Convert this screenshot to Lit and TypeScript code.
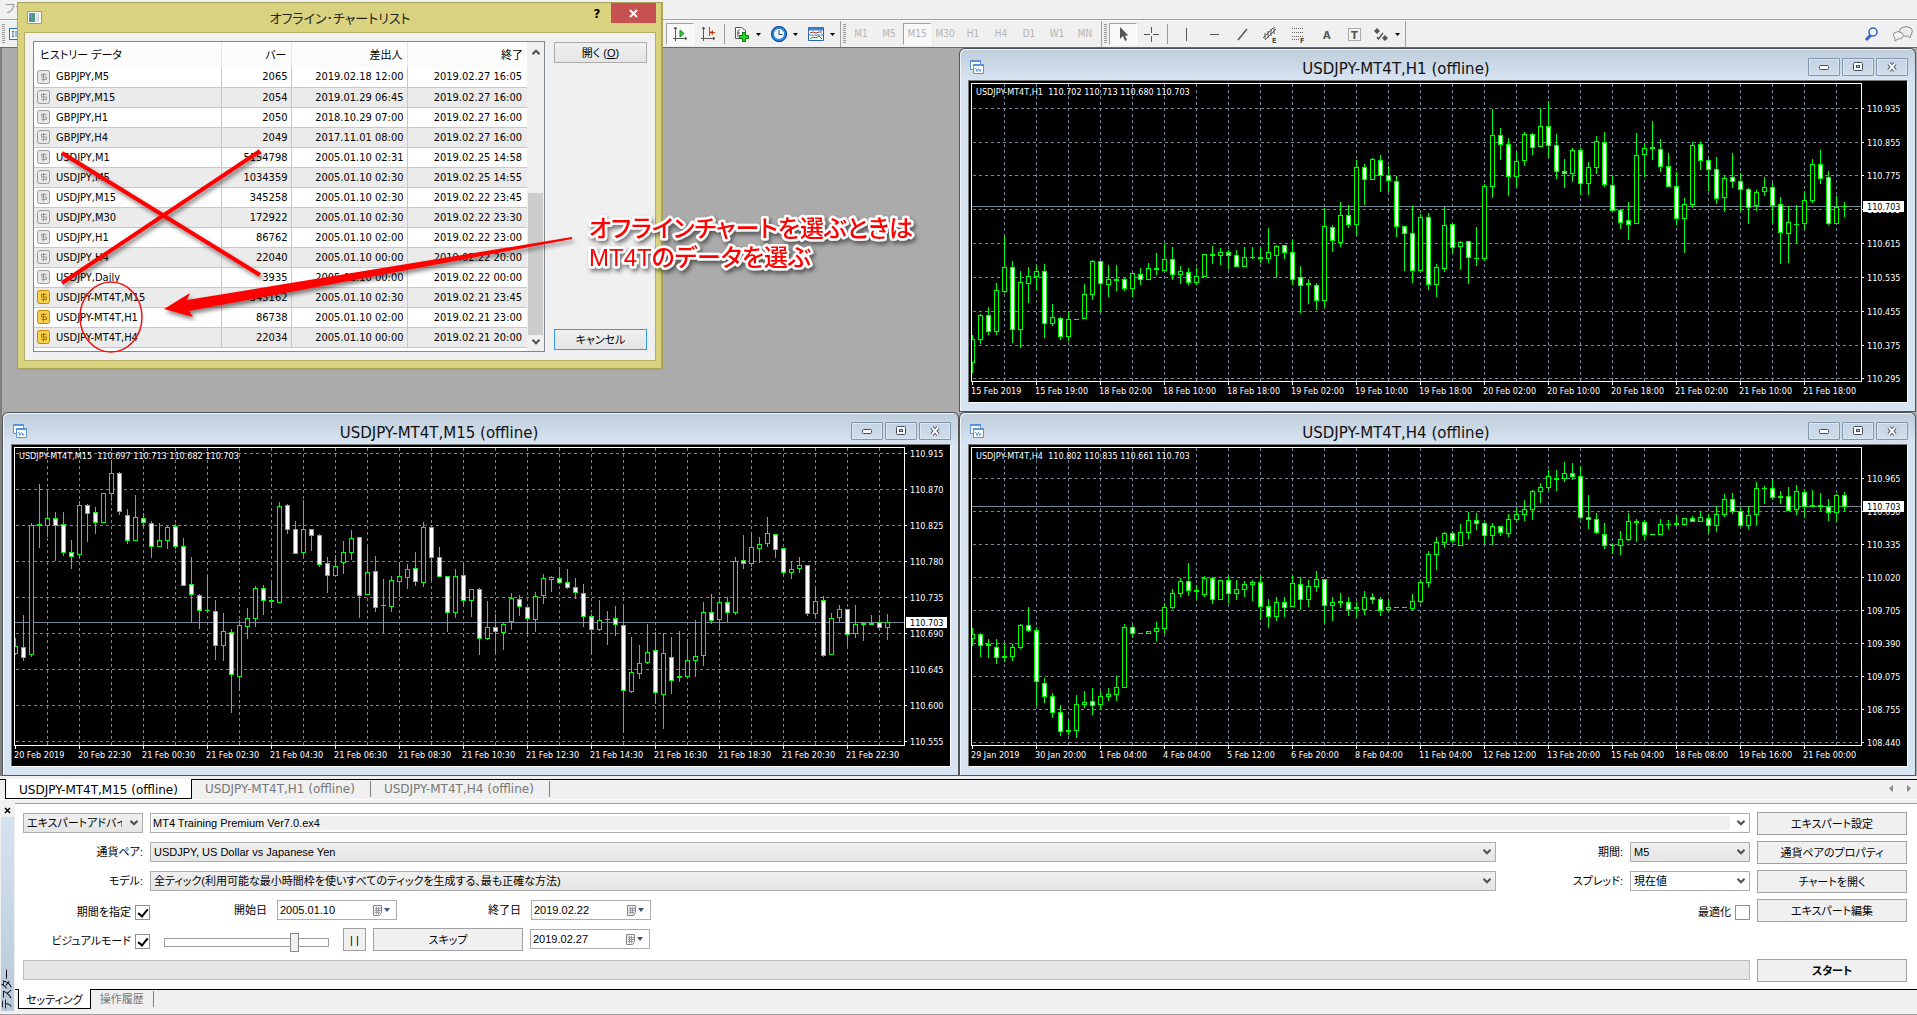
import { LitElement, html, svg, css } from "lit";
import { customElement, property } from "lit/decorators.js";

interface ChartSpec {
  name: string;
  info: string;
  origin: number;
  price: number;
  grid: number[];
  prices: string[];
  times: string[];
  bars: string;
}

/* Each bar is "high top bottom low direction"; levels count down in thirds of a pixel. */
const H1: ChartSpec = {
  name: "USDJPY-MT4T,H1 (offline)",
  info: "USDJPY-MT4T,H1\u00a0 110.702 110.713 110.680 110.703",
  origin: 4,
  price: 380,
  grid: [86, 188, 287, 388, 491, 593, 694, 797, 895],
  prices: ["110.935", "110.855", "110.775", "110.695", "110.615", "110.535", "110.455", "110.375", "110.295"],
  times: ["15 Feb 2019", "15 Feb 19:00", "18 Feb 02:00", "18 Feb 10:00", "18 Feb 18:00", "19 Feb 02:00", "19 Feb 10:00", "19 Feb 18:00", "20 Feb 02:00", "20 Feb 10:00", "20 Feb 18:00", "21 Feb 02:00", "21 Feb 10:00", "21 Feb 18:00"],
  bars: `765 778 848 880 u,702 706 779 792 u,682 706 755 765 d,609 631 755 765 u,465 562 635 640 u,543 562 749 789 d,
573 607 748 804 u,563 589 611 669 u,555 574 590 629 u,552 574 731 774 d,672 712 731 738 u,711 714 770 780 d,693 718 770 784 u,
718 718 718 718 u,612 643 716 716 u,540 544 644 660 u,544 544 611 693 d,555 598 614 651 u,555 599 601 633 u,595 598 626 635 d,
579 580 626 653 u,564 583 599 617 d,549 565 599 599 u,521 566 568 585 u,492 538 572 575 u,501 538 584 600 d,558 574 584 612 u,
565 577 608 617 d,565 589 608 617 u,523 523 590 590 u,498 523 525 552 u,505 517 527 555 u,510 517 526 568 d,510 526 560 563 d,
503 532 560 560 u,501 532 532 537 u,503 533 535 549 u,444 517 534 549 u,495 499 527 594 u,495 496 518 537 d,477 517 597 617 d,
558 592 617 699 d,597 610 612 672 u,610 616 662 690 d,384 439 662 683 u,435 442 482 518 d,366 406 486 503 u,375 406 434 444 d,
240 262 434 468 u,252 262 299 375 d,234 238 299 302 u,225 241 287 336 d,258 286 302 336 d,288 304 440 473 d,438 439 461 573 d,
378 460 572 609 d,402 412 570 573 u,399 412 614 630 d,552 562 614 651 u,381 436 566 576 u,432 433 503 521 d,483 487 500 570 u,
483 484 533 612 d,441 535 536 560 u,312 319 536 543 u,87 166 320 354 u,144 166 194 240 d,174 193 290 348 d,213 244 290 323 u,
156 163 242 258 u,159 163 203 225 d,84 139 200 200 u,63 139 197 234 d,162 196 275 297 d,237 274 281 324 d,204 211 281 306 u,
204 211 311 345 d,246 262 311 345 u,168 184 263 282 u,156 187 314 323 d,288 316 391 395 d,388 391 428 447 d,366 421 433 480 d,
159 226 431 434 u,189 205 224 293 u,123 203 205 240 u,177 208 260 276 d,219 259 320 320 d,276 319 416 437 d,354 373 415 521 u,
186 196 374 386 u,187 193 242 272 d,237 241 269 333 d,231 268 356 372 d,286 295 353 396 u,219 292 305 324 d,280 304 329 395 d,
324 328 383 432 d,330 337 377 395 u,291 322 335 350 u,309 322 377 431 d,351 373 458 552 d,380 427 461 549 u,375 432 433 491 u,
333 361 431 450 u,237 253 362 369 u,210 253 296 312 d,273 292 431 435 d,350 381 431 431 u,366 379 380 411 u`,
};

const M15: ChartSpec = {
  name: "USDJPY-MT4T,M15 (offline)",
  info: "USDJPY-MT4T,M15\u00a0 110.697 110.713 110.682 110.703",
  origin: 38,
  price: 637,
  grid: [130, 238, 346, 454, 562, 670, 778, 886, 994],
  prices: ["110.915", "110.870", "110.825", "110.780", "110.735", "110.690", "110.645", "110.600", "110.555"],
  times: ["20 Feb 2019", "20 Feb 22:30", "21 Feb 00:30", "21 Feb 02:30", "21 Feb 04:30", "21 Feb 06:30", "21 Feb 08:30", "21 Feb 10:30", "21 Feb 12:30", "21 Feb 14:30", "21 Feb 16:30", "21 Feb 18:30", "21 Feb 20:30", "21 Feb 22:30"],
  bars: `685 709 731 735 u,615 712 743 753 d,339 346 734 743 u,222 343 346 414 u,240 325 346 381 u,306 325 346 453 d,
306 344 428 438 d,390 427 440 477 d,273 286 434 444 u,282 286 311 396 d,291 307 338 372 d,249 250 338 338 u,150 190 251 273 u,
186 190 305 315 d,297 316 391 402 d,255 322 391 391 u,309 325 338 354 d,333 340 410 444 d,339 391 410 410 u,348 352 391 417 u,
343 349 410 417 d,384 409 527 527 d,441 523 554 636 d,552 556 602 657 d,495 601 602 609 u,570 604 707 750 d,609 664 707 753 u,
657 667 794 909 d,630 646 800 843 u,594 625 650 687 u,528 535 626 651 u,525 535 572 615 d,513 572 574 594 u,276 289 578 581 u,
282 286 359 372 d,333 358 429 432 d,270 358 428 438 u,357 358 377 423 d,372 376 464 471 d,441 460 497 549 d,435 469 497 500 u,
393 427 458 492 u,360 385 428 450 u,382 382 557 624 d,411 487 553 553 u,438 484 593 606 d,507 586 587 669 u,498 511 590 606 u,
458 499 515 561 u,462 478 503 537 u,426 475 515 528 d,336 352 518 533 u,348 352 443 515 d,411 442 500 503 d,498 499 608 666 d,
477 499 608 624 u,458 496 572 590 d,538 538 572 621 u,535 538 686 735 d,573 652 686 692 u,612 652 665 731 d,636 643 668 720 u,
549 565 635 660 u,555 568 590 618 d,591 592 626 672 d,546 559 629 666 u,492 505 557 582 u,498 502 509 546 u,471 505 518 522 d,
477 517 533 537 d,504 532 548 567 d,522 550 620 651 d,612 619 659 732 d,570 631 659 663 u,603 628 629 705 u,588 625 644 678 d,
585 646 842 966 d,681 787 845 849 u,705 760 791 807 u,642 727 758 762 u,666 721 848 882 d,669 730 854 957 u,681 742 812 852 d,
663 799 802 816 u,689 751 800 803 u,630 739 752 801 u,576 607 737 768 u,552 607 632 642 d,562 577 629 660 u,562 577 608 638 d,
441 454 608 615 u,375 451 461 477 d,366 412 461 471 u,381 403 415 459 u,321 370 401 411 u,373 373 419 444 d,414 415 488 497 d,
456 478 488 507 u,441 466 476 489 u,466 466 611 618 d,533 574 611 620 u,558 571 737 741 d,609 625 734 734 u,585 598 623 638 u,
598 598 674 710 d,585 643 671 684 u,636 640 644 693 u,615 640 644 644 u,615 637 653 656 d,612 637 653 690 u`,
};

const H4: ChartSpec = {
  name: "USDJPY-MT4T,H4 (offline)",
  info: "USDJPY-MT4T,H4\u00a0 110.802 110.835 110.661 110.703",
  origin: 38,
  price: 289,
  grid: [205, 304, 403, 502, 601, 700, 799, 898, 997],
  prices: ["110.965", "110.650", "110.335", "110.020", "109.705", "109.390", "109.075", "108.755", "108.440"],
  times: ["29 Jan 2019", "30 Jan 20:00", "1 Feb 04:00", "4 Feb 04:00", "5 Feb 12:00", "6 Feb 20:00", "8 Feb 04:00", "11 Feb 04:00", "12 Feb 12:00", "13 Feb 20:00", "15 Feb 04:00", "18 Feb 08:00", "19 Feb 16:00", "21 Feb 00:00"],
  bars: `655 673 686 708 u,669 673 707 741 d,687 704 706 744 u,687 712 743 762 d,702 740 742 756 u,702 712 740 753 u,
642 646 713 717 u,591 646 662 666 d,651 661 815 888 d,804 820 860 879 d,849 858 908 924 d,885 907 965 978 d,927 962 964 975 u,
855 883 962 984 u,843 877 884 894 u,834 874 887 915 d,843 859 884 898 u,834 853 860 873 u,798 832 854 873 u,642 652 832 832 u,
645 652 671 684 d,670 670 670 670 u,664 664 671 671 u,636 655 665 693 u,579 592 656 672 u,537 550 593 597 u,504 514 551 563 u,
459 514 542 558 d,525 541 544 570 u,498 505 554 563 u,502 505 569 582 d,511 511 569 569 u,498 511 551 579 d,511 538 551 570 u,
513 523 539 563 u,510 517 524 573 u,495 517 590 630 d,567 589 620 654 d,561 577 620 633 u,561 577 593 621 d,498 520 590 593 u,
501 523 569 600 d,510 529 569 591 u,483 508 530 546 u,508 508 587 639 d,561 577 587 633 u,549 574 576 594 u,561 577 597 618 d,
577 592 596 623 u,543 562 597 615 u,549 562 569 582 d,561 568 602 618 d,568 592 599 606 u,592 592 592 592 u,592 592 592 592 u,
552 574 596 600 u,507 517 575 579 u,423 433 518 531 u,381 397 434 480 u,366 370 397 414 u,364 370 391 400 d,342 367 407 407 u,
306 331 368 387 u,309 331 341 360 d,336 340 377 402 d,340 349 377 405 u,349 349 368 378 d,312 328 371 381 u,291 313 329 336 u,
270 298 314 333 u,240 244 299 330 u,219 232 245 279 u,180 199 233 240 u,180 205 208 243 u,156 190 206 216 u,159 190 200 212 d,
168 199 323 327 d,255 322 329 357 d,309 328 368 372 d,339 373 407 417 d,399 406 407 432 u,363 388 407 435 u,309 334 389 393 u,
327 334 338 396 u,330 337 374 390 d,373 373 373 373 u,327 343 374 374 u,330 343 344 357 u,315 341 344 348 u,325 325 342 348 u,
318 325 334 336 d,303 322 335 335 u,313 325 347 372 d,288 313 347 366 u,252 268 314 321 u,249 268 304 312 d,291 304 347 351 d,
288 316 347 357 u,216 235 314 348 u,228 235 236 282 u,207 235 263 270 d,243 260 263 282 u,231 259 302 305 d,225 244 299 315 u,
237 247 288 324 d,240 285 288 291 u,249 285 289 303 d,267 289 308 333 d,252 256 308 333 u,246 256 290 303 d`,
};

const HISTORY: [string, string, string, string][] = [
  ["GBPJPY,M5", "2065", "2019.02.18 12:00", "2019.02.27 16:05"],
  ["GBPJPY,M15", "2054", "2019.01.29 06:45", "2019.02.27 16:00"],
  ["GBPJPY,H1", "2050", "2018.10.29 07:00", "2019.02.27 16:00"],
  ["GBPJPY,H4", "2049", "2017.11.01 08:00", "2019.02.27 16:00"],
  ["USDJPY,M1", "5154798", "2005.01.10 02:31", "2019.02.25 14:58"],
  ["USDJPY,M5", "1034359", "2005.01.10 02:30", "2019.02.25 14:55"],
  ["USDJPY,M15", "345258", "2005.01.10 02:30", "2019.02.22 23:45"],
  ["USDJPY,M30", "172922", "2005.01.10 02:30", "2019.02.22 23:30"],
  ["USDJPY,H1", "86762", "2005.01.10 02:00", "2019.02.22 23:00"],
  ["USDJPY,H4", "22040", "2005.01.10 00:00", "2019.02.22 20:00"],
  ["USDJPY,Daily", "3935", "2005.01.10 00:00", "2019.02.22 00:00"],
  ["USDJPY-MT4T,M15", "345162", "2005.01.10 02:30", "2019.02.21 23:45"],
  ["USDJPY-MT4T,H1", "86738", "2005.01.10 02:00", "2019.02.21 23:00"],
  ["USDJPY-MT4T,H4", "22034", "2005.01.10 00:00", "2019.02.21 20:00"],
];

@customElement("chart-window")
export class ChartWindow extends LitElement {
  @property({ attribute: false }) spec!: ChartSpec;

  static styles = css`
    :host {
      display: flex;
      flex-direction: column;
      min-width: 0;
      min-height: 0;
      box-sizing: border-box;
      border: 1px solid #555;
      border-top-color: #4b5057;
      border-radius: 6px 6px 0 0;
      background: linear-gradient(#bfccda, #d7e4f2 32px, #d7e4f2);
      box-shadow: inset 1px 1px 0 #eef4fa;
      padding: 0 7px 8px 8px;
      font-family: "DejaVu Sans Condensed", "Noto Sans", sans-serif;
    }
    .bar {
      display: flex;
      align-items: center;
      height: 31px;
      flex: none;
    }
    .icon { display: block; margin-left: 2px; margin-top: 4px; }
    .title {
      flex: 1;
      margin: 8px 0 0;
      text-align: center;
      font-family: "DejaVu Sans", sans-serif;
      font-size: 15px;
      line-height: 20px;
      font-weight: 400;
      color: #111;
    }
    .controls { display: flex; gap: 2px; margin-top: 5px; }
    .control {
      width: 32px;
      height: 18px;
      padding: 0;
      display: grid;
      place-items: center;
      border: 1px solid #8094ae;
      border-radius: 1px;
      background: linear-gradient(#c5d3e2, #d0ddeb);
      box-shadow: inset 0 0 0 1px #dbe6f1;
    }
    .body {
      flex: 1;
      min-height: 0;
      display: grid;
      grid-template-columns: minmax(0, 1fr) 45px;
      grid-template-rows: minmax(0, 1fr) 20px;
      padding: 2px 0 0 2px;
      background: #000;
      border-top: 1px solid #777;
      border-left: 1px solid #777;
      border-right: 1px solid #fff;
      border-bottom: 1px solid #fff;
    }
    .plot { border: 1px solid #fff; overflow: hidden; }
    .plot svg, .axis { display: block; width: 100%; height: 100%; }
    .axis { overflow: visible; }
    .wide { grid-column: 1 / 3; }
    text { font-size: 9px; fill: #fff; }
    .dark { fill: #000; }
  `;

  private y(level: number) {
    return Math.floor(level / 3) - this.spec.origin;
  }

  private renderBars() {
    let green = "";
    let hollow = "";
    let solid = "";
    this.spec.bars.split(",").forEach((bar, i) => {
      const [h, t, b, l, dir] = bar.trim().split(" ");
      const x = i * 8;
      const high = this.y(+h), top = this.y(+t), bottom = this.y(+b), low = this.y(+l);
      if (low > high) green += `M${x} ${high}h1V${low}h-1z`;
      green += `M${x - 2} ${top}h5V${bottom + 1}h-5z`;
      if (bottom - top > 1) {
        const inner = `M${x - 1} ${top + 1}h3V${bottom}h-3z`;
        if (dir === "u") hollow += inner;
        else solid += inner;
      }
    });
    return svg`<path d=${green} fill="#0f0" shape-rendering="crispEdges"/>
      <path d=${hollow} fill="#000" shape-rendering="crispEdges"/>
      <path d=${solid} fill="#fff" shape-rendering="crispEdges"/>`;
  }

  render() {
    const s = this.spec;
    const columns = Array.from({ length: 27 }, (_, i) => (i + 1) * 32);
    return html`
      <div class="bar">
        <svg class="icon" width="14" height="14" viewBox="0 0 14 14" fill="#fff" stroke="#5a93dd">
          <path d="M.5.5h10v9h-10z"/><path d="M.5 1h10" stroke-width="2"/>
          <path d="M3 5.500l1-1 1 1 1-1"/>
          <path d="M3.500 4.500h10v9h-10z"/><path d="M3 5h11" stroke-width="2"/>
          <path d="M5 8.500h1l1 3 1.500-3 1.500 3 1-2" fill="none"/>
        </svg>
        <h2 class="title">${s.name}</h2>
        <div class="controls">
          <button class="control" aria-label="最小化"><svg width="12" height="6"><rect x="1.500" y="1.500" width="9" height="4" rx="1" fill="#fff" stroke="#444a66"/></svg></button>
          <button class="control" aria-label="最大化"><svg width="12" height="10"><rect x="1.500" y=".5" width="9" height="8" rx="1" fill="#fff" stroke="#444a66"/><rect x="4.500" y="3.500" width="3" height="2" fill="#c5d3e2" stroke="#444a66"/></svg></button>
          <button class="control" aria-label="閉じる"><svg width="12" height="10"><path d="M3 1.500l6 7M9 1.500l-6 7" stroke="#444a66" stroke-width="4"/><path d="M3 1.500l6 7M9 1.500l-6 7" stroke="#fff" stroke-width="2"/></svg></button>
        </div>
      </div>
      <div class="body">
        <div class="plot">
          <svg>
            <g stroke="#778899" stroke-dasharray="3 3">
              ${columns.map((x) => svg`<path d=${`M${x + 0.5} 0V400`}/>`)}
              ${s.grid.map((g) => svg`<path d=${`M1 ${this.y(g) + 0.5}H2400`}/>`)}
            </g>
            <path d=${`M0 ${this.y(s.price) + 0.5}H2400`} stroke="#778899"/>
            ${this.renderBars()}
            <text x="4" y="11">${s.info}</text>
          </svg>
        </div>
        <svg class="axis">
          ${s.grid.map((g, i) => svg`<path d=${`M0 ${this.y(g) + 1.5}h2`} stroke="#fff"/>
            <text x="5" y=${this.y(g) + 5}>${s.prices[i]}</text>`)}
          <rect x="1" y=${this.y(s.price) - 4} width="41" height="11" fill="#fff"/>
          <text class="dark" x="5" y=${this.y(s.price) + 5}>110.703</text>
        </svg>
        <svg class="axis wide">
          ${s.times.map((t, i) => svg`<path d=${`M${i * 64 + 1.5} 0v3`} stroke="#fff"/>
            <text x=${i * 64} y="12">${t}</text>`)}
        </svg>
      </div>`;
  }
}

const caret = html`<svg width="5" height="3"><path d="M0 0h5L2.500 3z" fill="#000"/></svg>`;
const chevron = html`<svg class="chev" width="8" height="6"><path d="M.5.8L4 4.300 7.500.8" fill="none" stroke="#505050" stroke-width="2"/></svg>`;

const toolIcons = {
  autoscroll: svg`<path d="M3.500 1v14M1 12.500h14" stroke="#555"/><path d="M2 3l1.500-2L5 3M13 11l2 1.500-2 1.500" fill="none" stroke="#555"/><path d="M8 4l4 3.500L8 11z" fill="#3c3" stroke="#181"/>`,
  shift: svg`<path d="M3.500 1v14M1 12.500h14" stroke="#555"/><path d="M2 3l1.500-2L5 3M13 11l2 1.500-2 1.500" fill="none" stroke="#555"/><path d="M9.500 1v9" stroke="#27a" stroke-width="1"/><path d="M10 6.500h5" stroke="#c30"/><path d="M13 4v5l-3-2.500z" fill="#c30"/>`,
  add: svg`<path d="M1.500 1.500h6l4 3v8h-10z" fill="#fff" stroke="#555"/><path d="M4 11V5q0-1 2-1M3 7h3" fill="none" stroke="#555"/><path d="M8.500 6.500h3v3h3v3h-3v3h-3v-3h-3v-3h3z" fill="#2d2" stroke="#070"/>`,
  clock: svg`<circle cx="8" cy="8" r="6.500" fill="#eef6ff" stroke="#2f86e0" stroke-width="3"/><circle cx="8" cy="8" r="7.500" fill="none" stroke="#123f86"/><path d="M8 4v4.500h3.500" fill="none" stroke="#345"/>`,
  template: svg`<path d="M.5 1.500h15v13H.5z" fill="#fff" stroke="#2a66b0"/><path d="M1 3h14" stroke="#3f83cf" stroke-width="3"/><path d="M1 9h14" stroke="#3f83cf"/><path d="M2 7l3-1 3 1 3-1 3 0" stroke="#932" fill="none"/><path d="M2 13l3-2 3 1 3-2 3 3" stroke="#282" fill="none"/>`,
  cursor: svg`<path d="M5 1v12l3-3 2 5 2-1-2-4.500h3.500z" fill="#555"/>`,
  cross: svg`<path d="M8.500 1v6M8.500 10v6M1 8.500h6M10 8.500h6" stroke="#555"/>`,
  vline: svg`<path d="M8.500 2v13" stroke="#555"/>`,
  hline: svg`<path d="M4 8.500h9" stroke="#555" stroke-width="1"/>`,
  trend: svg`<path d="M4 14L13 3" stroke="#555" stroke-width="1.500"/>`,
  channel: svg`<path d="M1 12L11 2M3 14L14 3M3 7v6M6 5v7M9 3v7M12 1v7" stroke="#555" fill="none"/><text x="10" y="17" font-size="7" font-weight="700" fill="#444">E</text>`,
  fibo: svg`<path d="M2 2.500h12M2 6.500h12M2 10.500h12M2 13.500h7" stroke="#666" stroke-dasharray="1 1"/><text x="10" y="17" font-size="7" font-weight="700" fill="#444">F</text>`,
  letter: svg`<text x="5" y="13" font-size="11" font-weight="700" fill="#555">A</text>`,
  label: svg`<path d="M2.500 2.500h12v12h-12z" fill="none" stroke="#666" stroke-dasharray="1 1"/><text x="5" y="13" font-size="11" font-weight="700" fill="#555">T</text>`,
  arrows: svg`<path d="M4 2l3 3-3 3-3-3zM12 9l3 3-3 3-3-3z" fill="#555"/><path d="M4 11l1.500 2L10 7" stroke="#555" fill="none" stroke-width="1.500"/>`,
};

@customElement("app-root")
export class AppRoot extends LitElement {
  static styles = css`
    :host {
      display: block;
      --tahoma: "DejaVu Sans Condensed", "Noto Sans CJK JP", sans-serif;
      --gothic: "Liberation Sans", "Noto Sans CJK JP", sans-serif;
      font-family: var(--gothic);
      font-size: 11px;
      line-height: 16px;
      font-feature-settings: "palt";
      color: #000;
    }
    * { box-sizing: border-box; }
    button, input, select { font: inherit; font-feature-settings: inherit; color: inherit; margin: 0; border-radius: 0; }
    .desk {
      position: relative;
      display: flex;
      flex-direction: column;
      min-height: 100vh;
      overflow: hidden;
      background: #f0f0f0;
    }
    .menu { height: 19px; padding: 1px 5px; font-size: 12px; color: #999; }

    /* toolbar */
    .toolbar {
      display: flex;
      align-items: center;
      height: 29px;
      padding-top: 1px;
      border-top: 1px solid #a0a0a0;
      border-bottom: 1px solid #696969;
      box-shadow: inset 0 1px 0 #fff;
      font-family: var(--tahoma);
    }
    .group { display: flex; align-items: center; height: 100%; }
    .standard { width: 666px; padding-left: 2px; gap: 4px; }
    .grip { width: 3px; height: 20px; background: repeating-linear-gradient(#999 0 1px, #f0f0f0 1px 2px); }
    .tool {
      width: 28px;
      height: 22px;
      padding: 0;
      border: 1px solid transparent;
      background: none;
      display: grid;
      place-items: center;
      font-size: 10px;
      color: #b4b4b4;
    }
    .tool svg { display: block; overflow: visible; }
    .pressed { background: #f8f8f8; border-color: #a0a0a0 #fff #fff #a0a0a0; }
    .drop { width: 37px; display: flex; align-items: center; gap: 5px; padding-left: 4px; }
    .rule { width: 1px; height: 20px; background: #999; margin: 0 4px 0 2px; }
    .edge { display: flex; align-items: center; gap: 2px; height: 100%; border-left: 1px solid #a0a0a0; padding-left: 2px; margin-right: 1px; }
    .edge.pad { margin: 0 2px; }
    .end { flex: 1; height: 100%; border-left: 1px solid #a0a0a0; display: flex; justify-content: flex-end; align-items: center; gap: 8px; padding-right: 3px; }
    .bare { border: 0; padding: 0; background: none; display: block; }
    .bare svg { display: block; }

    /* workspace */
    .mdi {
      flex: 1;
      display: grid;
      grid-template-columns: repeat(2, minmax(0, 1fr));
      grid-template-rows: repeat(2, minmax(0, 1fr));
      min-height: 728px;
      padding-right: 1px;
      border-left: 2px solid #808080;
      background: #ababab;
    }
    .tr { grid-area: 1 / 2; }
    .bl { grid-area: 2 / 1; }
    .br { grid-area: 2 / 2; }

    /* tab strips */
    .tabs { display: flex; align-items: flex-start; color: #808080; border-top: 1px solid #000; }
    .chart-tabs { height: 21px; margin-top: 3px; padding-left: 5px; border-bottom: 1px solid #fff; font-family: "DejaVu Sans", sans-serif; }
    .tab {
      height: 16px;
      margin-top: 1px;
      padding: 0 15px 0 13px;
      border: 0;
      border-right: 1px solid #808080;
      background: none;
      font-size: 12px;
      line-height: 16px;
      color: #777;
    }
    .tab.active { margin-top: -1px; height: 20px; padding: 2px 13px 0 13px; background: #fff; color: #000; border: 1px solid #000; border-top: 0; }
    .tab-arrows { margin-left: auto; display: flex; gap: 14px; padding: 5px 6px 0 0; }

    /* tester */
    .tester { display: flex; margin-top: 3px; height: 212px; border-bottom: 1px solid #a0a0a0; }
    .side { width: 15px; display: flex; flex-direction: column; align-items: center; }
    .side .bare { height: 14px; padding-top: 1px; }
    .side-title {
      flex: 1;
      width: 13px;
      margin: 0 0 3px;
      background: linear-gradient(#b9c8d8, #d5e3f1);
      writing-mode: vertical-rl;
      text-orientation: sideways;
      transform: rotate(180deg);
      line-height: 13px;
      font-size: 11px;
      font-weight: 400;
      padding-top: 2px;
    }
    .panel { flex: 1; min-width: 0; display: flex; flex-direction: column; border-top: 1px solid #a0a0a0; }
    .settings { display: flex; flex-direction: column; gap: 6px; background: #fff; padding: 8px 10px 7px 8px; }
    .row { display: flex; align-items: flex-start; gap: 7px; height: 23px; }
    .row.last { margin-top: 2px; }
    .lbl { width: 120px; text-align: right; line-height: 20px; margin-top: 1px; }
    .lbl.mid { width: 120px; }
    .box { display: grid; grid-template-columns: minmax(0, 1fr) auto; height: 20px; margin-top: 1px; border: 1px solid #acacac; background: linear-gradient(#f0f0f0, #e5e5e5); align-items: center; }
    .box.grow { flex: 1; min-width: 0; }
    .box.fix { width: 120px; }
    .box.plain { background: #fff; }
    .box select, .box input {
      grid-area: 1 / 1 / 2 / 3;
      appearance: none;
      width: 100%;
      height: 18px;
      padding: 0 20px 0 3px;
      border: 0;
      background: none;
      outline: 0;
      line-height: 16px;
    }
    .box input { padding-left: 2px; }
    .box .chev { grid-area: 1 / 2; margin-right: 4px; pointer-events: none; }
    .inset select { background: #f0f0f0 content-box; padding: 2px 19px 2px 2px; height: 18px; line-height: 14px; }
    .box .cal { grid-area: 1 / 2; margin-right: 3px; }
    .action { width: 150px; height: 23px; padding: 0; border: 1px solid #a0a0a0; background: #f0f0f0; }
    .spring { flex: 1; }
    .check { display: flex; justify-content: flex-end; align-items: center; gap: 4px; width: 127px; margin-top: 6px; line-height: 15px; }
    .check input {
      appearance: none;
      width: 15px;
      height: 15px;
      border: 1px solid #8e8f8f;
      background: #fff;
      display: grid;
      place-items: center;
    }
    .check input:checked::before { content: ""; width: 4px; height: 8px; border: solid #000; border-width: 0 2px 2px 0; transform: rotate(40deg); margin-top: -2px; }
    .date-lbl { line-height: 20px; margin: 1px 3px 0 0; text-align: right; }
    .d1 { width: 110px; }
    .d2 { width: 117px; }
    .slider { appearance: none; width: 165px; height: 20px; margin: 4px 7px 0 7px; background: none; }
    .slider::-webkit-slider-runnable-track { height: 9px; border: 1px solid #a0a0a0; background: #fff; }
    .slider::-webkit-slider-thumb { appearance: none; width: 9px; height: 19px; margin-top: -6px; border: 1px solid #888; background: #f0f0f0; }
    .action.pause { width: 23px; }
    .progress { flex: 1; height: 20px; margin-top: 1px; border: 1px solid #bcbcbc; background: #e6e6e6; }
    .start { font-weight: 700; }
    .lower { flex: 1; padding-left: 3px; }
    .lower .tab { padding: 0 9px; font-family: var(--gothic); font-size: 11px; }
    .lower .tab.active { padding: 2px 7px 0 7px; }

    /* dialog */
    .dialog {
      position: absolute;
      left: 17px;
      top: 2px;
      width: 646px;
      height: 368px;
      display: flex;
      flex-direction: column;
      padding: 0 5px 7px 6px;
      border: 1px solid #aaa35c;
      border-right-width: 2px;
      border-bottom-width: 2px;
      background: #d9d27f;
    }
    .dialog-bar { display: flex; align-items: flex-start; height: 29px; }
    .dialog-icon { margin: 8px 0 0 3px; flex: none; }
    .dialog-title { flex: 1; margin: 0; padding: 6px 0 0 57px; text-align: center; font-size: 13px; line-height: 20px; font-weight: 400; color: #222; }
    .help { width: 30px; height: 22px; padding: 0 0 0 2px; border: 0; background: none; font: 700 13px/22px var(--tahoma); }
    .close { width: 45px; height: 20px; padding: 0; border: 0; background: #c75050; display: grid; place-items: center; }
    .client { flex: 1; display: flex; gap: 9px; padding: 8px; border: 1px solid #b5ae66; background: #f0f0f0; }
    .list { display: flex; flex: 1; border: 1px solid #828790; background: #fff; }
    .history { flex: 1; border-collapse: collapse; table-layout: fixed; font-family: var(--tahoma); align-self: flex-start; }
    .history th { height: 25px; padding: 2px 4px 0; font-weight: 400; text-align: right; border-right: 1px solid #dfeaf7; background: #fcfcfc; }
    .history th:first-child { text-align: left; padding-left: 6px; }
    .history td { height: 20px; padding: 0 3px 0 2px; line-height: 19px; text-align: right; border-right: 1px solid #c8c8c8; border-bottom: 1px solid #c8c8c8; }
    .history tr:nth-child(even) td { background: #ebebeb; }
    .history td:last-child, .history th:last-child { border-right: 0; }
    .history td:last-child { padding-right: 5px; }
    .sym { display: flex; align-items: center; gap: 4px; }
    .c1 { width: 187px; }
    .c2 { width: 70px; }
    .c3 { width: 116px; }
    .scroll { width: 17px; display: flex; flex-direction: column; align-items: center; background: #f0f0f0; padding: 7px 0 6px; }
    .track { flex: 1; width: 100%; display: flex; align-items: flex-end; padding: 5px 1px 4px; }
    .thumb { width: 100%; height: 142px; background: #cdcdcd; }
    .side-buttons { width: 93px; display: flex; flex-direction: column; justify-content: space-between; padding: 1px 0 2px; }
    .push { height: 21px; padding: 0; border: 1px solid #acacac; background: linear-gradient(#f0f0f0, #e5e5e5); }
    .push.focus { border-color: #3399ff; }

    /* callouts drawn above everything */
    .callout { position: absolute; left: 0; top: 0; width: 960px; height: 412px; pointer-events: none; }
    .note {
      font-family: "Liberation Sans", "Noto Sans CJK JP", sans-serif;
      font-size: 24px;
      font-weight: 500;
      fill: #f00;
      stroke: #fff;
      stroke-width: 5px;
      stroke-linejoin: round;
      paint-order: stroke;
    }
  `;

  private tool(icon: unknown, name: string, pressed = false) {
    return html`<button class=${pressed ? "tool pressed" : "tool"} aria-label=${name}><svg width="17" height="17">${icon}</svg></button>`;
  }

  private dropTool(icon: unknown, name: string) {
    return html`<button class="tool drop" aria-label=${name}><svg width="17" height="17">${icon}</svg>${caret}</button>`;
  }

  private combo(id: string, text: string, cls: string) {
    return html`<span class="box ${cls}"><select id=${id} aria-label=${id}><option>${text}</option></select>${chevron}</span>`;
  }

  private date(id: string, text: string) {
    return html`<span class="box fix plain"><input id=${id} aria-label=${id} .value=${text} />
      <svg class="cal" width="21" height="13"><path d="M1.500 1.500h8v7l-2 3h-6z" fill="#eee" stroke="#868686"/><path d="M3 4.500h6M3 6.500h6M3 8.500h5M4.500 3v7M6.500 3v7" stroke="#99a"/><path d="M12 4h6l-3 4z" fill="#3b5580"/></svg></span>`;
  }

  private renderDialog() {
    return html`<section class="dialog" aria-labelledby="dialog-title">
      <div class="dialog-bar">
        <svg class="dialog-icon" width="15" height="13"><path d="M.5.5h14v12H.5z" fill="#fff" stroke="#999"/><path d="M2 2h6v9H2z" fill="#4a9a86"/><path d="M2 2h3v5H2z" fill="#6a8fc0"/><path d="M9 2h3v9H9z" fill="#dde"/></svg>
        <h1 class="dialog-title" id="dialog-title">オフライン･チャートリスト</h1>
        <button class="help">?</button>
        <button class="close" aria-label="閉じる"><svg width="9" height="9"><path d="M1 1l7 7M8 1L1 8" stroke="#fff" stroke-width="2"/></svg></button>
      </div>
      <div class="client">
        <div class="list">
          <table class="history">
            <colgroup><col class="c1" /><col class="c2" /><col class="c3" /><col /></colgroup>
            <thead><tr><th>ヒストリー データ</th><th>バー</th><th>差出人</th><th>終了</th></tr></thead>
            <tbody>
              ${HISTORY.map(([sym, bars, from, to], i) => {
                const gold = i > 10;
                return html`<tr>
                  <td><span class="sym"><svg width="16" height="16"><rect x="1.500" y="1.500" width="12" height="13" rx="2" fill=${gold ? "#f6cf4e" : "#e9e9e9"} stroke=${gold ? "#c08a00" : "#999"}/><path d="M10.500 5.500h-5v2.500h5v2.500h-5M7.500 4v8.500" fill="none" stroke=${gold ? "#a87400" : "#999"}/></svg>${sym}</span></td>
                  <td>${bars}</td><td>${from}</td><td>${to}</td>
                </tr>`;
              })}
            </tbody>
          </table>
          <div class="scroll">
            <svg width="8" height="6"><path d="M.5 5.200L4 1.700l3.500 3.500" fill="none" stroke="#505050" stroke-width="2"/></svg>
            <div class="track"><div class="thumb"></div></div>
            ${chevron}
          </div>
        </div>
        <div class="side-buttons">
          <button class="push">開く (<u>O</u>)</button>
          <button class="push focus">キャンセル</button>
        </div>
      </div>
    </section>`;
  }

  private renderCallout() {
    return html`<svg class="callout" viewBox="0 0 960 412">
      <defs>
        <filter id="soft" x="-10%" y="-10%" width="120%" height="130%"><feDropShadow dx="2" dy="3" stdDeviation="2" flood-color="#000" flood-opacity=".5"/></filter>
      </defs>
      <g filter="url(#soft)">
        <path d="M62 153L260 275M260 151L62 283" stroke="#f00" stroke-width="4"/>
        <path d="M164 309L190 293 187 300 572 237 572 239 189 311 193 317z" fill="#f00"/>
        <text class="note" x="589" y="237">オフラインチャートを選ぶときは</text>
        <text class="note" x="589" y="266">MT4Tのデータを選ぶ</text>
      </g>
      <ellipse cx="111" cy="317" rx="31" ry="35" fill="none" stroke="#e11" stroke-width="1.500"/>
    </svg>`;
  }

  private renderTester() {
    return html`<section class="tester">
      <div class="side">
        <button class="bare" aria-label="閉じる"><svg width="7" height="7"><path d="M1 1l5 5M6 1L1 6" stroke="#000" stroke-width="1.500"/></svg></button>
        <h2 class="side-title">テスター</h2>
      </div>
      <div class="panel">
        <div class="settings">
          <div class="row">
            ${this.combo("kind", "エキスパートアドバイザ", "fix")}
            ${this.combo("expert", "MT4 Training Premium Ver7.0.ex4", "grow plain inset")}
            <button class="action">エキスパート設定</button>
          </div>
          <div class="row">
            <label class="lbl" for="symbol">通貨ペア:</label>
            ${this.combo("symbol", "USDJPY, US Dollar vs Japanese Yen", "grow")}
            <label class="lbl mid" for="period">期間:</label>
            ${this.combo("period", "M5", "fix")}
            <button class="action">通貨ペアのプロパティ</button>
          </div>
          <div class="row">
            <label class="lbl" for="model">モデル:</label>
            ${this.combo("model", "全ティック(利用可能な最小時間枠を使いすべてのティックを生成する、最も正確な方法)", "grow")}
            <label class="lbl mid" for="spread">スプレッド:</label>
            ${this.combo("spread", "現在値", "fix plain")}
            <button class="action">チャートを開く</button>
          </div>
          <div class="row">
            <label class="check">期間を指定<input type="checkbox" checked /></label>
            <label class="date-lbl d1" for="from">開始日</label>
            ${this.date("from", "2005.01.10")}
            <label class="date-lbl d2" for="to">終了日</label>
            ${this.date("to", "2019.02.22")}
            <span class="spring"></span>
            <label class="check">最適化<input type="checkbox" /></label>
            <button class="action">エキスパート編集</button>
          </div>
          <div class="row">
            <label class="check">ビジュアルモード<input type="checkbox" checked /></label>
            <input class="slider" type="range" min="0" max="32" value="26" aria-label="speed" />
            <button class="action pause">| |</button>
            <button class="action">スキップ</button>
            ${this.date("skip", "2019.02.27")}
          </div>
          <div class="row last">
            <div class="progress"></div>
            <button class="action start">スタート</button>
          </div>
        </div>
        <nav class="tabs lower">
          <button class="tab active">セッティング</button>
          <button class="tab">操作履歴</button>
        </nav>
      </div>
    </section>`;
  }

  render() {
    const frames = ["M1", "M5", "M15", "M30", "H1", "H4", "D1", "W1", "MN"];
    return html`<main class="desk">
      <div class="menu">ファイル</div>
      <div class="toolbar">
        <div class="group standard">
          <span class="grip"></span>
          <svg width="14" height="14"><path d="M.5 1.500h10v11H.5z" fill="#fff" stroke="#2a70b8"/><path d="M4 4v6M3 5l1-1 1 1M3 9l1 1 1-1M7 4v6" stroke="#3572b0" fill="none"/></svg>
        </div>
        <div class="group">
          ${this.tool(toolIcons.autoscroll, "自動スクロール", true)}
          ${this.tool(toolIcons.shift, "チャートシフト")}
          <span class="rule"></span>
          ${this.dropTool(toolIcons.add, "インディケータ")}
          ${this.dropTool(toolIcons.clock, "期間")}
          ${this.dropTool(toolIcons.template, "テンプレート")}
        </div>
        <span class="edge"><span class="grip"></span></span>
        <div class="group">
          ${frames.map((f) => html`<button class=${f === "M15" ? "tool pressed" : "tool"}>${f}</button>`)}
        </div>
        <span class="edge pad"><span class="grip"></span></span>
        <div class="group">
          ${this.tool(toolIcons.cursor, "カーソル", true)}
          ${this.tool(toolIcons.cross, "クロスヘア")}
          <span class="rule"></span>
          ${this.tool(toolIcons.vline, "垂直線")}
          ${this.tool(toolIcons.hline, "水平線")}
          ${this.tool(toolIcons.trend, "トレンドライン")}
          ${this.tool(toolIcons.channel, "チャネル")}
          ${this.tool(toolIcons.fibo, "フィボナッチ")}
          ${this.tool(toolIcons.letter, "テキスト")}
          ${this.tool(toolIcons.label, "ラベル")}
          ${this.dropTool(toolIcons.arrows, "矢印")}
        </div>
        <div class="end">
          <button class="bare" aria-label="検索"><svg width="24" height="16"><path d="M6 14l5-5" stroke="#2a62c8" stroke-width="3"/><circle cx="13" cy="6" r="4" fill="#f6faff" stroke="#2a62c8" stroke-width="1.500"/></svg></button>
          <button class="bare" aria-label="チャット"><svg width="22" height="16"><path d="M9 2q5-3 10 0 3 3 0 7l-1 3-2-2q-6 1-8-3-1-3 1-5z" fill="#ececec" stroke="#8a8a8a"/><path d="M2 7q4-3 8 0 3 3 0 5-2 1-4 1l-3 2v-3q-3-2-1-5z" fill="#f4f4f4" stroke="#8a8a8a"/></svg></button>
        </div>
      </div>
      <div class="mdi">
        <chart-window class="tr" .spec=${H1}></chart-window>
        <chart-window class="bl" .spec=${M15}></chart-window>
        <chart-window class="br" .spec=${H4}></chart-window>
      </div>
      <nav class="tabs chart-tabs">
        <button class="tab active">USDJPY-MT4T,M15 (offline)</button>
        <button class="tab">USDJPY-MT4T,H1 (offline)</button>
        <button class="tab">USDJPY-MT4T,H4 (offline)</button>
        <span class="tab-arrows">
          <svg width="4" height="7"><path d="M4 0v7L0 3.500z" fill="#888"/></svg>
          <svg width="4" height="7"><path d="M0 0v7l4-3.500z" fill="#888"/></svg>
        </span>
      </nav>
      ${this.renderTester()}
      ${this.renderDialog()}
      ${this.renderCallout()}
    </main>`;
  }
}
